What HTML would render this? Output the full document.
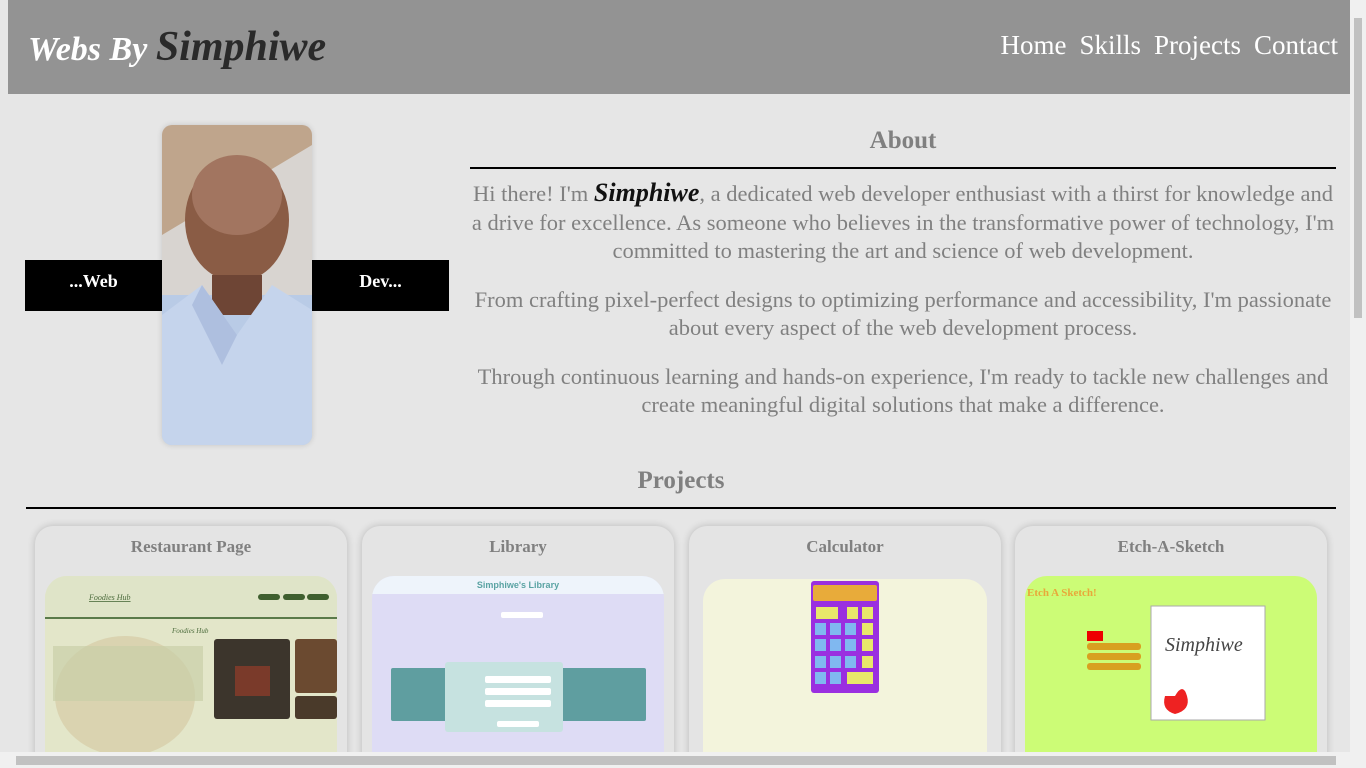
<!DOCTYPE html>
<html><head><meta charset="utf-8"><style>
*{margin:0;padding:0;box-sizing:border-box}
html,body{width:1366px;height:768px;overflow:hidden;background:#e6e6e6;font-family:"Liberation Serif",serif}
#w{position:relative;width:1366px;height:768px;overflow:hidden}
.hdr{position:absolute;left:8px;top:0;width:1342px;height:94px;background:#939393}
.logo{position:absolute;left:20px;top:23px;font-style:italic;font-weight:bold;color:#fff;font-size:34px}
.logo span{color:#2a2a2a;font-size:42px}
.nav{position:absolute;right:12px;top:30px;color:#fff;font-size:27px}
.nav a{margin-left:13px}
.box{position:absolute;top:260px;width:137px;height:51px;background:#000;color:#fff;font-weight:bold;font-size:18px;text-align:center;line-height:42px}
.photo{position:absolute;left:162px;top:125px;width:150px;height:320px;border-radius:10px;overflow:hidden;box-shadow:0 0 6px rgba(0,0,0,.15)}
h2{position:absolute;color:#808080;font-size:25px;font-weight:bold;text-align:center}
.line{position:absolute;height:1.5px;background:#000}
.about{position:absolute;left:470px;top:179px;width:866px;text-align:center;color:#808080;font-size:22.5px;line-height:28.5px}
.about p{margin-bottom:20px}
.about b{color:#111;font-style:italic;font-size:26px}
.clip{position:absolute;left:0;top:0;width:1366px;height:752px;overflow:hidden}
.card{position:absolute;top:526px;width:312px;height:260px;border-radius:18px;background:#e4e4e4;box-shadow:0 0 8px rgba(0,0,0,.2)}
.card h3{text-align:center;color:#808080;font-size:17px;font-weight:bold;margin-top:11px}
.shot{position:absolute;top:50px;left:10px;width:292px;height:200px;border-radius:22px 22px 0 0;overflow:hidden}
.vs{position:absolute;right:0;top:0;width:16px;height:768px;background:#f0f0f0}
.hs{position:absolute;left:0;top:752px;width:1366px;height:16px;background:#f0f0f0}
</style></head><body><div id="w">
<div class="hdr"><div class="logo">Webs By <span>Simphiwe</span></div>
<div class="nav"><a>Home</a><a>Skills</a><a>Projects</a><a>Contact</a></div></div>

<div class="box" style="left:25px">...Web</div>
<div class="box" style="left:312px">Dev...</div>
<div class="photo"><svg width="150" height="320" viewBox="0 0 150 320">
<rect width="150" height="320" fill="#d8d4d0"/>
<polygon points="0,0 150,0 150,20 0,110" fill="#bfa58c"/>
<rect x="0" y="170" width="150" height="150" fill="#b9cbe6"/>
<ellipse cx="75" cy="95" rx="52" ry="62" fill="#8a5c45"/>
<ellipse cx="75" cy="70" rx="45" ry="40" fill="#a27560"/>
<rect x="50" y="150" width="50" height="40" fill="#6e4535"/>
<polygon points="0,190 40,160 75,210 110,160 150,185 150,320 0,320" fill="#c5d4ec"/>
<polygon points="40,160 75,210 60,240 30,180" fill="#aebfdf"/>
</svg></div>

<h2 style="left:470px;width:866px;top:127px">About</h2>
<div class="line" style="left:470px;width:866px;top:167px"></div>
<div class="about">
<p>Hi there! I'm <b>Simphiwe</b>, a dedicated web developer enthusiast with a thirst for knowledge and a drive for excellence. As someone who believes in the transformative power of technology, I'm committed to mastering the art and science of web development.</p>
<p>From crafting pixel-perfect designs to optimizing performance and accessibility, I'm passionate about every aspect of the web development process.</p>
<p>Through continuous learning and hands-on experience, I'm ready to tackle new challenges and create meaningful digital solutions that make a difference.</p>
</div>

<h2 style="left:26px;width:1310px;top:467px">Projects</h2>
<div class="line" style="left:26px;width:1310px;top:507px"></div>

<div class="clip">
<div class="card" style="left:35px"><h3>Restaurant Page</h3>
<div class="shot" style="background:#e3e6c9"><svg width="292" height="200">
<rect width="292" height="42" fill="#dfe4c8"/><rect y="41" width="292" height="2" fill="#5a7a4a"/>
<text x="44" y="24" font-size="8" font-style="italic" fill="#4a6a3a" text-decoration="underline">Foodies Hub</text>
<rect x="213" y="18" width="22" height="6" rx="3" fill="#3f5f2f"/><rect x="238" y="18" width="22" height="6" rx="3" fill="#3f5f2f"/><rect x="262" y="18" width="22" height="6" rx="3" fill="#3f5f2f"/>
<ellipse cx="80" cy="120" rx="70" ry="60" fill="#d4c7a0" opacity=".6"/>
<text x="127" y="57" font-size="7" fill="#4a6a3a" font-style="italic">Foodies Hub</text>
<rect x="8" y="70" width="150" height="55" fill="#c9cfa8" opacity=".7"/>
<rect x="169" y="63" width="76" height="80" rx="3" fill="#3c352c"/><rect x="250" y="63" width="42" height="54" rx="3" fill="#6b4a30"/><rect x="250" y="120" width="42" height="23" rx="3" fill="#4a3a2a"/>
<rect x="190" y="90" width="35" height="30" fill="#7a3a2a"/>
</svg></div></div>

<div class="card" style="left:362px"><h3>Library</h3>
<div class="shot" style="background:#dedcf5"><svg width="292" height="200">
<rect width="292" height="18" fill="#eef4fb"/>
<text x="146" y="12" font-size="9" font-weight="bold" fill="#5aa3a3" text-anchor="middle" font-family="Liberation Sans">Simphiwe's Library</text>
<rect x="129" y="36" width="42" height="6" rx="2" fill="#fff"/>
<rect x="19" y="92" width="255" height="53" rx="2" fill="#5f9ea0"/>
<rect x="73" y="86" width="118" height="70" rx="3" fill="#c6e2e0"/>
<rect x="113" y="100" width="66" height="7" rx="2" fill="#fff"/><rect x="113" y="112" width="66" height="7" rx="2" fill="#fff"/><rect x="113" y="124" width="66" height="7" rx="2" fill="#fff"/>
<rect x="125" y="145" width="42" height="6" rx="2" fill="#fff"/>
</svg></div></div>

<div class="card" style="left:689px"><h3>Calculator</h3>
<div class="shot" style="left:14px;width:284px;top:53px;background:#f3f4dc"><svg width="284" height="200">
<rect x="108" y="2" width="68" height="112" rx="3" fill="#9a2fe0"/>
<rect x="110" y="6" width="64" height="16" rx="2" fill="#e8ab3a"/>
<g fill="#80b8f0"><rect x="112" y="44" width="11" height="12"/><rect x="127" y="44" width="11" height="12"/><rect x="142" y="44" width="11" height="12"/><rect x="112" y="60" width="11" height="12"/><rect x="127" y="60" width="11" height="12"/><rect x="142" y="60" width="11" height="12"/><rect x="112" y="77" width="11" height="12"/><rect x="127" y="77" width="11" height="12"/><rect x="142" y="77" width="11" height="12"/><rect x="112" y="93" width="11" height="12"/><rect x="127" y="93" width="11" height="12"/></g>
<g fill="#e8e86a"><rect x="113" y="28" width="22" height="12"/><rect x="144" y="28" width="11" height="12"/><rect x="159" y="28" width="11" height="12"/><rect x="159" y="44" width="11" height="12"/><rect x="159" y="60" width="11" height="12"/><rect x="159" y="77" width="11" height="12"/><rect x="144" y="93" width="26" height="12"/></g>
</svg></div></div>

<div class="card" style="left:1015px"><h3>Etch-A-Sketch</h3>
<div class="shot" style="background:#ccfc76"><svg width="292" height="200">
<text x="2" y="20" font-size="11" font-weight="bold" fill="#e8a83a">Etch A Sketch!</text>
<rect x="126" y="30" width="114" height="114" fill="#fff" stroke="#aaa"/>
<rect x="62" y="55" width="16" height="10" fill="#e00"/>
<rect x="62" y="67" width="54" height="7" rx="3" fill="#d8a020"/><rect x="62" y="77" width="54" height="7" rx="3" fill="#d8a020"/><rect x="62" y="87" width="54" height="7" rx="3" fill="#d8a020"/>
<text x="140" y="75" font-size="20" fill="#444" font-style="italic">Simphiwe</text>
<path d="M150 120 q8-14 12 0 q4 14-12 18 q-14-4-10-18z" fill="#e22"/>
</svg></div></div>
</div>

<div class="vs"><div style="position:absolute;left:4px;top:18px;width:8px;height:300px;background:#c1c1c1"></div></div>
<div class="hs"><div style="position:absolute;left:16px;top:4px;width:1320px;height:9px;background:#c1c1c1"></div></div>
</div></body></html>
